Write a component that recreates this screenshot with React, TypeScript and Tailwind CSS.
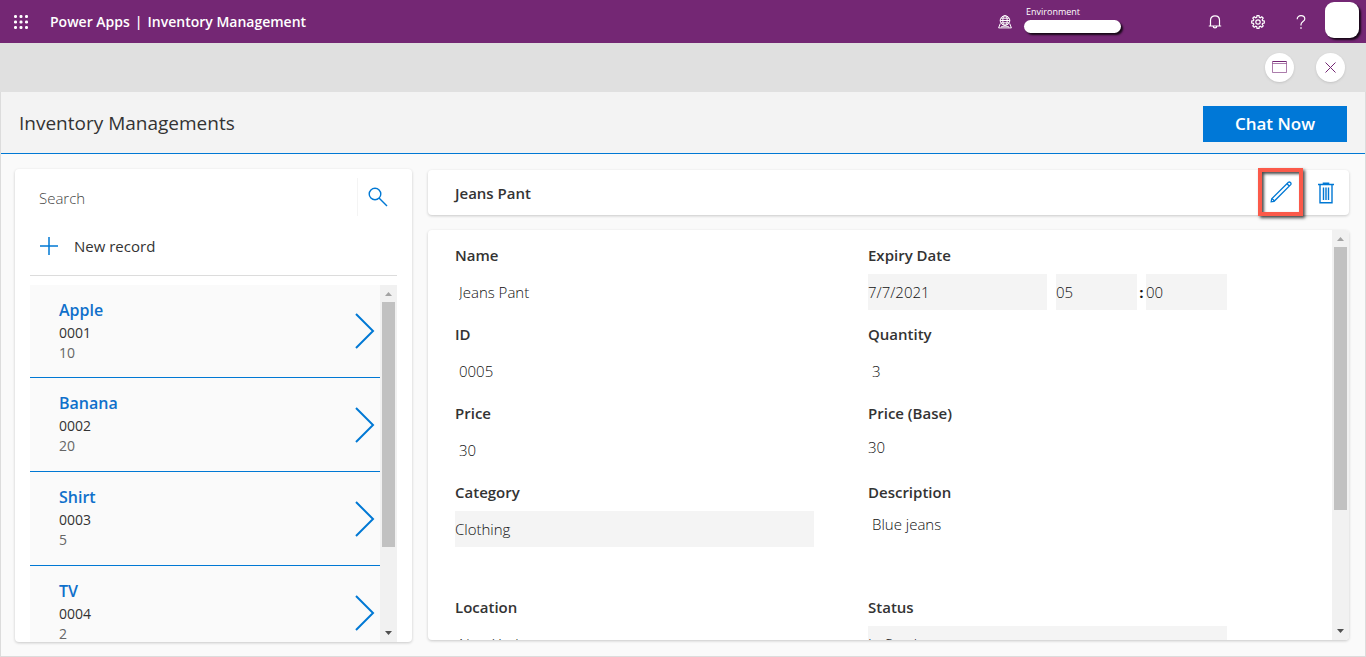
import React from 'react';

interface Product {
  name: string;
  id: string;
  quantity: string;
}

const products: Product[] = [
  { name: 'Apple', id: '0001', quantity: '10' },
  { name: 'Banana', id: '0002', quantity: '20' },
  { name: 'Shirt', id: '0003', quantity: '5' },
  { name: 'TV', id: '0004', quantity: '2' },
];

const WaffleIcon = () => (
  <svg width="14" height="14" viewBox="0 0 14 14" fill="currentColor">
    {[0, 5.5, 11].map((y) => [0, 5.5, 11].map((x) => <rect key={`${x}-${y}`} x={x} y={y} width="3" height="3" rx="1.2" />))}
  </svg>
);

const GlobeIcon = () => (
  <svg width="14" height="14" viewBox="0 0 14 14" fill="none" stroke="currentColor">
    <circle cx="7" cy="5.5" r="4.8" />
    <ellipse cx="7" cy="5.5" rx="2.2" ry="4.8" />
    <path d="M2.2 5.5h9.6M3 3.2h8M3 7.8h8M2.3 8.5.6 12.9h12.8l-1.7-4.4M3 12c2-1.2 6-1.2 8 0" />
  </svg>
);

const BellIcon = () => (
  <svg width="14" height="14" viewBox="0 0 14 14" fill="none" stroke="currentColor" strokeWidth="1.2">
    <path d="M2.5 11V5.2C2.5 2.6 4.4.8 7 .8s4.5 1.800 4.500 4.400V11M.8 11h12.400M5.200 11.200c0 2.300 3.600 2.300 3.600 0" />
  </svg>
);

const GearIcon = () => (
  <svg width="14" height="14" viewBox="0 0 14 14" fill="none" stroke="currentColor" strokeWidth="1.2">
    <path d="M6 .7h2l.3 1.7 1 .4 1.5-1 1.4 1.4-1 1.5.4 1 1.7.3v2l-1.7.3-.4 1 1 1.5-1.4 1.4-1.5-1-1 .4-.3 1.7H6l-.3-1.7-1-.4-1.5 1-1.4-1.4 1-1.5-.4-1L.7 8V6l1.7-.3.4-1-1-1.5 1.4-1.4 1.5 1 1-.4z" />
    <circle cx="7" cy="7" r="2.2" />
  </svg>
);

const HelpIcon = () => (
  <svg width="10" height="14" viewBox="0 0 10 14" fill="none" stroke="currentColor" strokeWidth="1.2">
    <path d="M1.2 4.2C1.2 2 2.8.7 5 .7s3.8 1.3 3.8 3.2C8.8 6.5 5 6.7 5 9.5v1" />
    <path d="M5 12.3v1.4" strokeWidth="1.4" />
  </svg>
);

const ScrollBar = ({ thumb }: { thumb: string }) => (
  <div className="flex w-[17px] shrink-0 flex-col items-center bg-[#f1f1f1]">
    <svg className="h-[17px] w-[17px] shrink-0" viewBox="0 0 17 17" fill="#a3a3a3">
      <path d="M5 11h7L8.5 7z" />
    </svg>
    <div className="min-h-0 w-full flex-1">
      <div className={`mx-auto w-[13px] bg-[#c1c1c1] ${thumb}`} />
    </div>
    <svg className="h-[17px] w-[17px] shrink-0" viewBox="0 0 17 17" fill="#505050">
      <path d="M5 6h7L8.5 10z" />
    </svg>
  </div>
);

interface FieldProps {
  id: string;
  label: string;
  value: string;
  variant?: 'plain' | 'flush' | 'boxed';
}

const variants = {
  plain: 'h-9 px-1',
  flush: 'h-[30px]',
  boxed: 'h-9 bg-[#f4f4f4]',
};

const Field = ({ id, label, value, variant = 'plain' }: FieldProps) => (
  <div className="flex flex-col gap-[9px]">
    <label htmlFor={id} className="h-5 text-[15px] leading-5 font-semibold">
      {label}
    </label>
    <input id={id} readOnly value={value} className={`w-full text-[15px] font-light text-[#111111] outline-none ${variants[variant]}`} />
  </div>
);

const Header = () => (
  <header className="flex h-[43px] shrink-0 items-center bg-[#742774] text-white">
    <button aria-label="App launcher" className="ml-[14px]">
      <WaffleIcon />
    </button>
    <div className="ml-[22px] flex gap-[5px] text-[14px] font-semibold">
      <a href="#">Power Apps</a>
      <span>|</span>
      <span>Inventory Management</span>
    </div>
    <div className="ml-auto flex items-center">
      <GlobeIcon />
      <div className="ml-3 flex w-[97px] flex-col gap-[2px] pb-1">
        <span className="px-[2px] text-[9px] leading-[12px] font-medium">Environment</span>
        <span className="h-[13px] rounded-full bg-white shadow-[2px_2px_2px_#000000cc]" />
      </div>
      <button aria-label="Notifications" className="ml-[87px]">
        <BellIcon />
      </button>
      <button aria-label="Settings" className="ml-[29px]">
        <GearIcon />
      </button>
      <button aria-label="Help" className="ml-[31px]">
        <HelpIcon />
      </button>
      <button aria-label="Account" className="mr-[7px] mb-[3px] ml-[19px] h-9 w-[34px] rounded-[9px] bg-white shadow-[2px_2px_2px_#000000cc]" />
    </div>
  </header>
);

const PreviewBar = () => (
  <div className="flex h-[49px] shrink-0 items-center justify-end gap-[22px] bg-[#e0e0e0] pr-[21px] pb-px text-[#742774]">
    <button aria-label="Window" className="flex h-[29px] w-[29px] items-center justify-center rounded-full bg-white shadow-sm">
      <svg width="15" height="12" viewBox="0 0 15 12" fill="none" stroke="currentColor">
        <path d="M.5.5h14" />
        <path d="M.5.5v11h14V.5M.5 2.5h14" strokeOpacity=".6" />
      </svg>
    </button>
    <button aria-label="Close" className="flex h-[29px] w-[29px] items-center justify-center rounded-full bg-white shadow-sm">
      <svg width="11" height="11" viewBox="0 0 11 11" fill="none" stroke="currentColor">
        <path d="m.5.5 10 10M10.5.5l-10 10" />
      </svg>
    </button>
  </div>
);

const RecordList = () => (
  <aside className="flex w-[397px] shrink-0 flex-col rounded-[4px] bg-white px-[15px] shadow-[0_1px_3px_#00000033]">
    <div className="mt-[9px] flex h-[38px] shrink-0">
      <input
        aria-label="Search"
        placeholder="Search"
        className="min-w-0 flex-1 px-[9px] pt-[2px] text-[15px] font-light outline-none placeholder:text-[#444444]"
      />
      <button aria-label="Search records" className="flex w-10 items-center border-l border-[#f4f4f4] pl-[10px] text-[#0078d4]">
        <svg width="20" height="20" viewBox="0 0 20 20" fill="none" stroke="currentColor" strokeWidth="1.4">
          <circle cx="7" cy="7" r="5.8" />
          <path d="m11 11 8 8" />
        </svg>
      </button>
    </div>
    <button className="mt-2 flex h-11 shrink-0 items-center gap-4 px-[10px] text-[15px] text-[#333333]">
      <svg width="18" height="18" viewBox="0 0 18 18" fill="none" stroke="#0078d4" strokeWidth="1.5">
        <path d="M9 0v18M0 9h18" />
      </svg>
      New record
    </button>
    <div className="mt-[7px] h-px shrink-0 bg-[#dcdcdc]" />
    <div className="mt-[9px] flex min-h-0 flex-1">
      <ul className="min-w-0 flex-1 overflow-hidden bg-[#fafafa]">
        {products.map((product) => (
          <li
            key={product.id}
            className="flex h-[94px] items-center justify-between border-b border-[#0078d4] pr-[5px] pl-[29px] first:h-[93px]"
          >
            <div className="pb-[3px] text-[14px] leading-5">
              <p className="text-[16px] leading-[26px] font-semibold text-[#0f70cb]">{product.name}</p>
              <p className="text-[#333333]">{product.id}</p>
              <p className="text-[#666666]">{product.quantity}</p>
            </div>
            <svg width="20" height="36" viewBox="0 0 20 36" fill="none" stroke="#0078d4" strokeWidth="2">
              <path d="m1 1 17 17L1 35" />
            </svg>
          </li>
        ))}
      </ul>
      <ScrollBar thumb="h-[76%]" />
    </div>
  </aside>
);

const RecordDetail = () => (
  <section className="flex min-w-0 flex-1 flex-col gap-[15px]">
    <div className="mt-px flex h-[45px] shrink-0 items-center rounded-[4px] bg-white pl-[27px] shadow-[0_1px_3px_#00000033]">
      <h2 className="flex-1 pt-px text-[15px] font-semibold">Jeans Pant</h2>
      <button
        aria-label="Edit"
        className="mb-[2px] flex h-12 w-[45px] items-center justify-center border-4 border-[#fb5a4a] shadow-[2px_2px_3px_#000000b3,inset_2px_2px_3px_#000000b3]"
      >
        <svg width="22" height="22" viewBox="0 0 22 22" fill="none" stroke="#0078d4" strokeWidth="1.3">
          <path d="M1.2 20.800l.5-2.900L18.400 1.300c1.400-1 3.300.9 2.300 2.300L4.100 20.300zM1.700 17.900c1.300.2 2.200 1.100 2.400 2.400M17 2.700l2.300 2.300" />
        </svg>
      </button>
      <button aria-label="Delete" className="flex h-full w-[46px] items-center justify-center">
        <svg width="16" height="22" viewBox="0 0 16 22" fill="none" stroke="#0078d4" strokeWidth="1.4">
          <path d="M0 2.500h16M5.500 2v-.8h5V2" strokeWidth="1.6" />
          <path d="M2 2.500v18.300h12V2.500M5.500 5.500v12.500M8 5.500v12.500M10.500 5.500v12.500" />
        </svg>
      </button>
    </div>
    <div className="mb-[2px] flex min-h-0 flex-1 overflow-hidden rounded-[4px] bg-white shadow-[0_1px_3px_#00000033]">
      <form className="grid min-w-0 flex-1 grid-cols-2 content-start gap-x-[54px] gap-y-[14px] overflow-hidden pt-[15px] pr-[105px] pl-[27px]">
        <Field id="name" label="Name" value="Jeans Pant" />
        <div className="flex flex-col gap-[9px]">
          <label htmlFor="expiry" className="h-5 text-[15px] leading-5 font-semibold">
            Expiry Date
          </label>
          <div className="flex items-center text-[15px] font-light text-[#111111]">
            <input id="expiry" readOnly value="7/7/2021" className="h-9 min-w-0 flex-1 bg-[#f4f4f4] outline-none" />
            <input aria-label="Hour" readOnly value="05" className="ml-[9px] h-9 w-[81px] bg-[#f4f4f4] outline-none" />
            <span className="w-[9px] text-center font-bold">:</span>
            <input aria-label="Minute" readOnly value="00" className="h-9 w-[81px] bg-[#f4f4f4] outline-none" />
          </div>
        </div>
        <Field id="record-id" label="ID" value="0005" />
        <Field id="quantity" label="Quantity" value="3" />
        <Field id="price" label="Price" value="30" />
        <Field id="price-base" label="Price (Base)" value="30" variant="flush" />
        <Field id="category" label="Category" value="Clothing" variant="boxed" />
        <div className="flex h-[101px] flex-col gap-[9px]">
          <label htmlFor="description" className="h-5 text-[15px] leading-5 font-semibold">
            Description
          </label>
          <textarea
            id="description"
            readOnly
            value="Blue jeans"
            className="flex-1 resize-none px-1 pt-[2px] text-[15px] font-light text-[#111111] outline-none"
          />
        </div>
        <Field id="location" label="Location" value="New York" />
        <Field id="status" label="Status" value="In Stock" variant="boxed" />
      </form>
      <ScrollBar thumb="h-[70%]" />
    </div>
  </section>
);

export default function App() {
  return (
    <div className="flex h-screen flex-col bg-white font-['Open_Sans',sans-serif] text-[#333333]">
      <Header />
      <PreviewBar />
      <div className="flex min-h-0 flex-1 flex-col border-x border-b border-[#dcdcdc] bg-[#fafafa]">
        <div className="flex h-[62px] shrink-0 items-center justify-between border-b border-[#0078d4] bg-[#f3f3f3] px-[18px] pt-[2px]">
          <h1 className="text-[19px] font-medium">Inventory Managements</h1>
          <button className="h-9 w-36 bg-[#0078d7] pt-px text-[17px] font-semibold text-white">Chat Now</button>
        </div>
        <main className="flex min-h-0 flex-1 gap-4 px-[14px] py-[15px] pr-4 pb-[14px]">
          <RecordList />
          <RecordDetail />
        </main>
      </div>
    </div>
  );
}
